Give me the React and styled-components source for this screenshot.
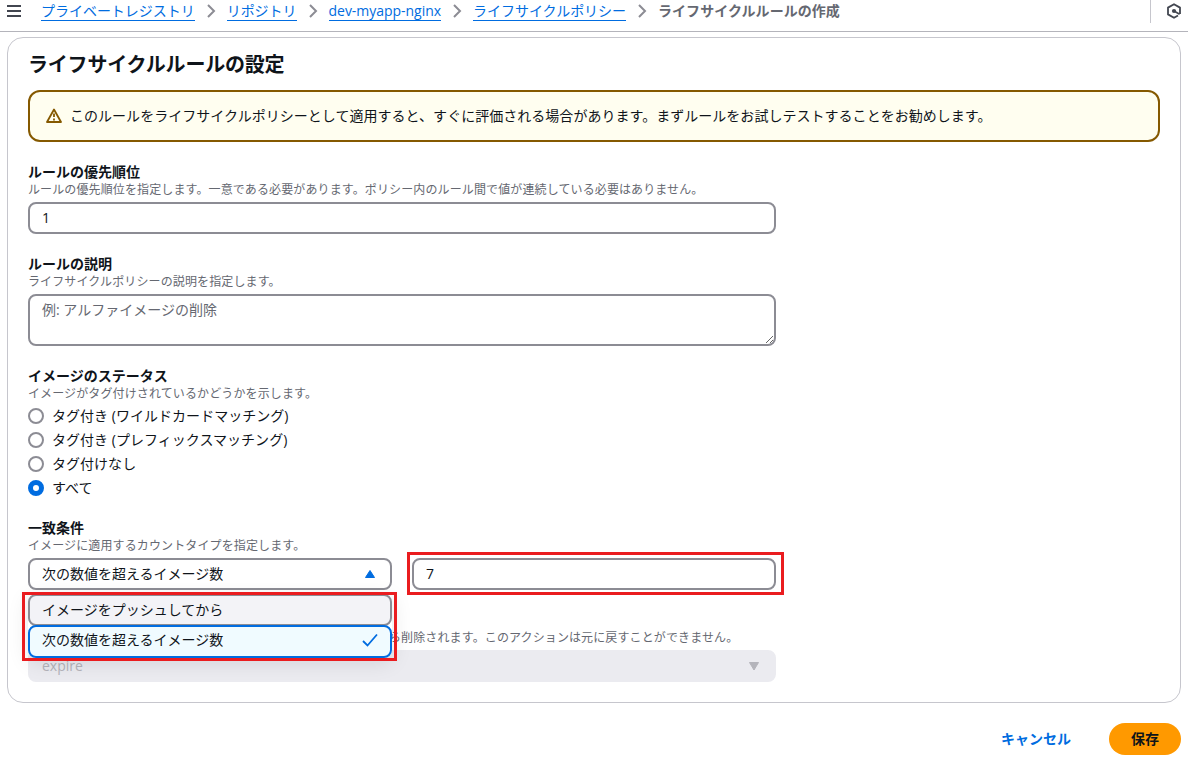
import React from 'react'
import styled, { createGlobalStyle } from 'styled-components'


const GlobalStyle = createGlobalStyle`
  * {
    box-sizing: border-box;
  }

  body {
    margin: 0;
    overflow: hidden;
    background: #fff;
    color: #0f141a;
    font-family: "Open Sans", "Noto Sans CJK JP", sans-serif;
    font-size: 14px;
    line-height: 20px;
  }
`

const TopBar = styled.header`
  display: flex;
  align-items: flex-start;
  height: 32px;
  padding-left: 6px;
  border-bottom: 1px solid #b4b4bb;
`

const MenuIcon = styled.svg`
  width: 16px;
  height: 16px;
  margin-top: 3px;
`

const Breadcrumbs = styled.nav`
  flex: 1;
  display: flex;
  align-items: center;
  height: 22px;
  margin-left: 19px;
  white-space: nowrap;
`

const Crumb = styled.a`
  height: 20px;
  line-height: 20px;
  color: #006ce0;
  border-bottom: 1px solid #006ce0;
  letter-spacing: -0.03px;
`

const Current = styled.span`
  color: #656871;
  font-weight: 700;
  letter-spacing: 0.04px;
`

const Chevron = styled.svg`
  width: 16px;
  height: 16px;
  margin: 0 8px;
`

const Tools = styled.div`
  display: flex;
  width: 38px;
  height: 23px;
  padding: 3px 0 0 15px;
  border-left: 1px solid #c6c6cd;
`

const Card = styled.section`
  display: flex;
  flex-direction: column;
  gap: 20px;
  margin: 5px 7px 0;
  padding: 15px 20px 20px;
  border: 1px solid #c6c6cd;
  border-radius: 16px;
`

const Title = styled.h2`
  margin: 0 0 -7px;
  font-size: 20px;
  line-height: 24px;
  letter-spacing: -0.2px;
`

const Alert = styled.div`
  display: flex;
  align-items: center;
  gap: 8px;
  height: 52px;
  padding: 0 16px;
  border: 2px solid #855900;
  border-radius: 12px;
  background: #fffef0;
  letter-spacing: 0.03px;
`

const Field = styled.div`
  width: 748px;
`

const Label = styled.div`
  min-height: 20px;
  font-weight: 700;
`

const Hint = styled.div`
  height: 16px;
  margin-bottom: 4px;
  padding-left: ${p => p.$indent || 0}px;
  color: #656871;
  font-size: 12px;
  line-height: 16px;
  letter-spacing: 0.12px;
  white-space: nowrap;
`

const Input = styled.input`
  display: block;
  width: 100%;
  height: 32px;
  padding: 0 12px 2px;
  border: 2px solid #8c8c94;
  border-radius: 8px;
  outline: none;
  background: #fff;
  color: #0f141a;
  font: inherit;
`

const TextArea = styled.textarea`
  display: block;
  width: 100%;
  height: 52px;
  padding: 4px 12px;
  border: 2px solid #8c8c94;
  border-radius: 8px;
  outline: none;
  font: inherit;

  &::placeholder {
    color: #656871;
  }
`

const RadioList = styled.div`
  display: flex;
  flex-direction: column;
  gap: 4px;
`

const RadioItem = styled.label`
  display: flex;
  align-items: center;
  gap: 8px;
  height: 20px;
  letter-spacing: 0.03px;
`

const Dot = styled.span`
  width: 16px;
  height: 16px;
  border: ${p => p.$checked ? '5px solid #006ce0' : '2px solid #8c8c94'};
  border-radius: 50%;
`

const Columns = styled.div`
  display: grid;
  grid-template-columns: 364px 364px;
  gap: 20px;
`

const Cell = styled.div`
  position: relative;
`

const Select = styled.div`
  display: flex;
  align-items: center;
  justify-content: space-between;
  height: 32px;
  padding: 0 12px;
  border: 2px solid ${p => p.$disabled ? '#ebebf0' : '#8c8c94'};
  border-radius: 8px;
  background: ${p => p.$disabled ? '#ebebf0' : '#fff'};
  color: ${p => p.$disabled ? '#b4b4bb' : '#0f141a'};
`

const Dropdown = styled.div`
  position: absolute;
  z-index: 1;
  top: 36px;
  left: 0;
  width: 364px;
  border-radius: 8px;
  background: #fff;
  box-shadow: 0 4px 20px 1px rgba(0, 7, 22, 0.1);
`

const Option = styled.div`
  display: flex;
  align-items: center;
  justify-content: space-between;
  height: ${p => p.$selected ? 33 : 32}px;
  margin-top: ${p => p.$selected ? -1 : 0}px;
  padding: 0 12px ${p => p.$selected ? 3 : 0}px;
  border: 2px solid ${p => p.$selected ? '#006ce0' : '#8c8c94'};
  border-radius: 8px;
  background: ${p => p.$selected ? '#f0fbff' : '#f3f3f7'};
`

// red frame drawn around the values to set
const Marker = styled.div`
  position: absolute;
  z-index: 2;
  top: ${p => p.$top}px;
  left: ${p => p.$left}px;
  width: ${p => p.$width}px;
  height: ${p => p.$height}px;
  border: 3px solid #ea1c1f;
  pointer-events: none;
`

const Actions = styled.footer`
  display: flex;
  justify-content: flex-end;
  gap: 17px;
  padding: 20px 7px 0;
`

const Button = styled.button`
  height: 32px;
  padding: 0 ${p => p.$primary ? 22 : 21}px;
  border: none;
  border-radius: 20px;
  background: ${p => p.$primary ? '#ff9900' : 'transparent'};
  color: ${p => p.$primary ? '#0f141a' : '#006ce0'};
  font: inherit;
  font-weight: 700;
`

const statuses = [
  'タグ付き (ワイルドカードマッチング)',
  'タグ付き (プレフィックスマッチング)',
  'タグ付けなし',
  'すべて',
]

const links = ['プライベートレジストリ', 'リポジトリ', 'dev-myapp-nginx', 'ライフサイクルポリシー']

const Triangle = ({ up, color }) => (
  <svg width="16" height="16" viewBox="0 0 16 16">
    <path
      d={up ? 'M8 4.5L12.5 11.5H3.5Z' : 'M8 12L3.5 4.5H12.5Z'}
      fill={color}
      stroke={color}
      strokeLinejoin="round"
    />
  </svg>
)

const App = () => {
  return (
    <>
      <GlobalStyle />
      <TopBar>
        <MenuIcon viewBox="0 0 16 16">
          <path d="M1 3h14M1 8h14M1 13h14" stroke="#424650" strokeWidth="2" />
        </MenuIcon>
        <Breadcrumbs>
          {links.map(text => (
            <React.Fragment key={text}>
              <Crumb>{text}</Crumb>
              <Chevron viewBox="0 0 16 16" fill="none">
                <path d="M5 2l6 6-6 6" stroke="#8c8c94" strokeWidth="2" />
              </Chevron>
            </React.Fragment>
          ))}
          <Current>ライフサイクルルールの作成</Current>
        </Breadcrumbs>
        <Tools>
          <svg width="16" height="16" viewBox="0 0 16 16" fill="none">
            <path d="M14 11V4.6L8 1.2 2 4.6v6.8l6 3.4 4-2.3" stroke="#424650" strokeWidth="1.8" strokeLinejoin="round" />
            <circle cx="8" cy="8" r="2.1" fill="#424650" />
            <path d="M8 8l5.6 3.2" stroke="#424650" strokeWidth="1.6" />
          </svg>
        </Tools>
      </TopBar>

      <Card>
        <Title>ライフサイクルルールの設定</Title>
        <Alert>
          <svg width="16" height="16" viewBox="0 0 16 16" fill="none">
            <path d="M8 1.5L15 14H1Z" stroke="#855900" strokeWidth="1.8" strokeLinejoin="round" />
            <path d="M8 5.5V9M8 10.5v2" stroke="#855900" strokeWidth="1.8" />
          </svg>
          <span>このルールをライフサイクルポリシーとして適用すると、すぐに評価される場合があります。まずルールをお試しテストすることをお勧めします。</span>
        </Alert>

        <Field>
          <Label>ルールの優先順位</Label>
          <Hint>ルールの優先順位を指定します。一意である必要があります。ポリシー内のルール間で値が連続している必要はありません。</Hint>
          <Input defaultValue="1" />
        </Field>

        <Field>
          <Label>ルールの説明</Label>
          <Hint>ライフサイクルポリシーの説明を指定します。</Hint>
          <TextArea placeholder="例: アルファイメージの削除" />
        </Field>

        <Field>
          <Label>イメージのステータス</Label>
          <Hint>イメージがタグ付けされているかどうかを示します。</Hint>
          <RadioList>
            {statuses.map(text => (
              <RadioItem key={text}>
                <Dot $checked={text === 'すべて'} />
                {text}
              </RadioItem>
            ))}
          </RadioList>
        </Field>

        <Field>
          <Label>一致条件</Label>
          <Hint>イメージに適用するカウントタイプを指定します。</Hint>
          <Columns>
            <Cell>
              <Select>
                次の数値を超えるイメージ数
                <Triangle up color="#006ce0" />
              </Select>
              <Dropdown>
                <Option>イメージをプッシュしてから</Option>
                <Option $selected>
                  次の数値を超えるイメージ数
                  <svg width="16" height="16" viewBox="0 0 16 16" fill="none">
                    <path d="M1 9l4.5 4.5L15 2.5" stroke="#006ce0" strokeWidth="1.8" />
                  </svg>
                </Option>
              </Dropdown>
              <Marker $top={34} $left={-6} $width={375} $height={69} />
            </Cell>
            <Cell>
              <Input defaultValue="7" />
              <Marker $top={-6} $left={-5} $width={377} $height={43} />
            </Cell>
          </Columns>
        </Field>

        {/* the open dropdown covers the start of this field */}
        <Field>
          <Label />
          <Hint $indent={361}>ら削除されます。このアクションは元に戻すことができません。</Hint>
          <Select $disabled>
            expire
            <Triangle color="#b4b4bb" />
          </Select>
        </Field>
      </Card>

      <Actions>
        <Button>キャンセル</Button>
        <Button $primary>保存</Button>
      </Actions>
    </>
  )
}

export default App
